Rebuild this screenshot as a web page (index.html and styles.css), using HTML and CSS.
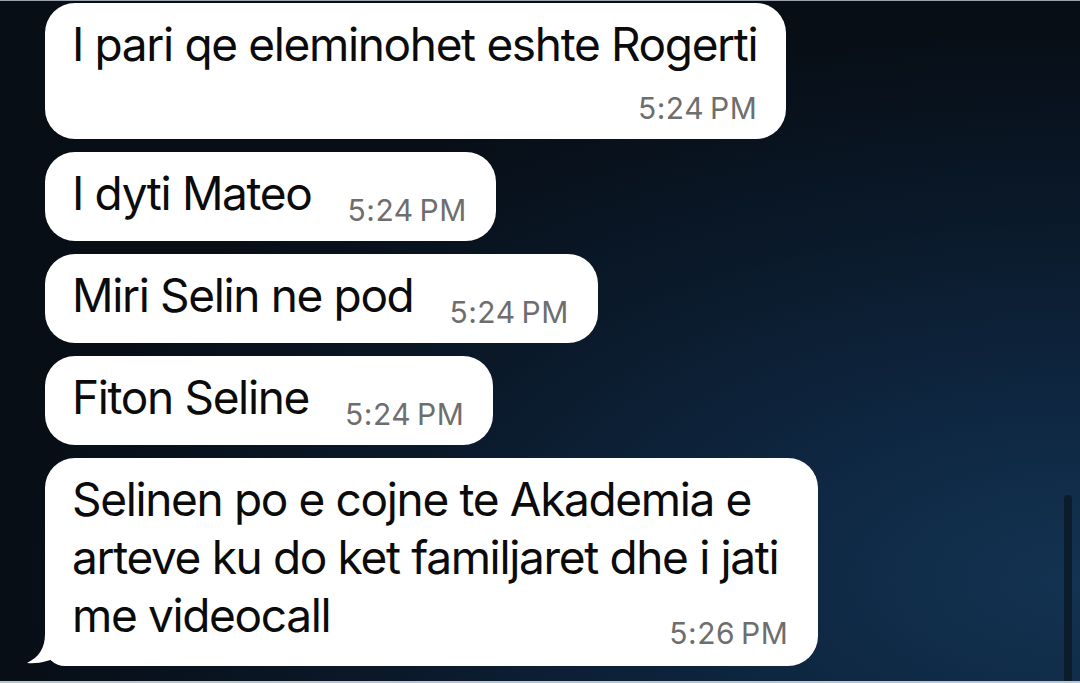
FILE: index.html
```html
<!DOCTYPE html>
<html>
<head>
    <title>Chat</title>
    <link rel="stylesheet" href="styles.css">
</head>
<body>
    <div class="chat">
        <div class="bubble stacked">
            <p class="text">I pari qe eleminohet eshte Rogerti</p>
            <span class="time">5:24&#8201;PM</span>
        </div>
        <div class="bubble inline">
            <p class="text">I dyti Mateo</p>
            <span class="time">5:24&#8201;PM</span>
        </div>
        <div class="bubble inline">
            <p class="text">Miri Selin ne pod</p>
            <span class="time">5:24&#8201;PM</span>
        </div>
        <div class="bubble inline">
            <p class="text">Fiton Seline</p>
            <span class="time">5:24&#8201;PM</span>
        </div>
        <div class="bubble last">
            <p class="text">Selinen po e cojne te Akademia e<br>arteve ku do ket familjaret dhe i jati<br>me videocall</p>
            <span class="time">5:26&#8201;PM</span>
            <svg class="tail" width="50" height="40" viewBox="0 0 50 40">
                <path d="M18 0 L18 8 C18 22 12 31 0 37 C12 38 24 35 33 29 L44 20 L40 0 Z" fill="#fff"/>
            </svg>
        </div>
    </div>
    <div class="scrollbar"></div>
</body>
</html>
```

FILE: styles.css
```css
* {
    margin: 0;
    padding: 0;
    box-sizing: border-box;
}

html, body {
    height: 100%;
}

body {
    font-family: Inter, "Liberation Sans", Arial, sans-serif;
    background: radial-gradient(ellipse 110% 90% at 100% 85%, #133352 0%, #0e2640 30%, #0a1828 62%, #070e16 90%);
    border-top: 1px solid #9aa3ab;
    border-bottom: 2px solid #b9c4cd;
    overflow: hidden;
    position: relative;
}

.chat {
    display: flex;
    flex-direction: column;
    align-items: flex-start;
    gap: 13px;
    padding: 2px 0 0 45px;
}

.bubble {
    background: #fff;
    border-radius: 30px;
    padding: 12px 29px 17px 27px;
}

.text {
    font-size: 46px;
    line-height: 58px;
    letter-spacing: -1.35px;
    color: #0b0b0b;
}

.time {
    font-size: 30px;
    line-height: 28px;
    letter-spacing: 0.5px;
    color: #6e6e6e;
    white-space: nowrap;
}

.stacked {
    display: flex;
    flex-direction: column;
}

.stacked .time {
    align-self: flex-end;
    margin-top: 21px;
}

.inline {
    display: flex;
    align-items: flex-end;
    padding-bottom: 19px;
}

.inline .time {
    margin-left: 36px;
    margin-bottom: -2px;
}

.last {
    position: relative;
    padding-right: 40px;
    padding-bottom: 19px;
    border-bottom-left-radius: 20px;
}

.last .time {
    display: block;
    text-align: right;
    margin-top: -25px;
    margin-right: -10px;
}

.tail {
    position: absolute;
    left: -18px;
    bottom: 0;
}

.scrollbar {
    position: absolute;
    right: 8px;
    bottom: 0;
    width: 8px;
    height: 186px;
    border-radius: 4px 4px 0 0;
    background: #0b1c2d;
}
```
